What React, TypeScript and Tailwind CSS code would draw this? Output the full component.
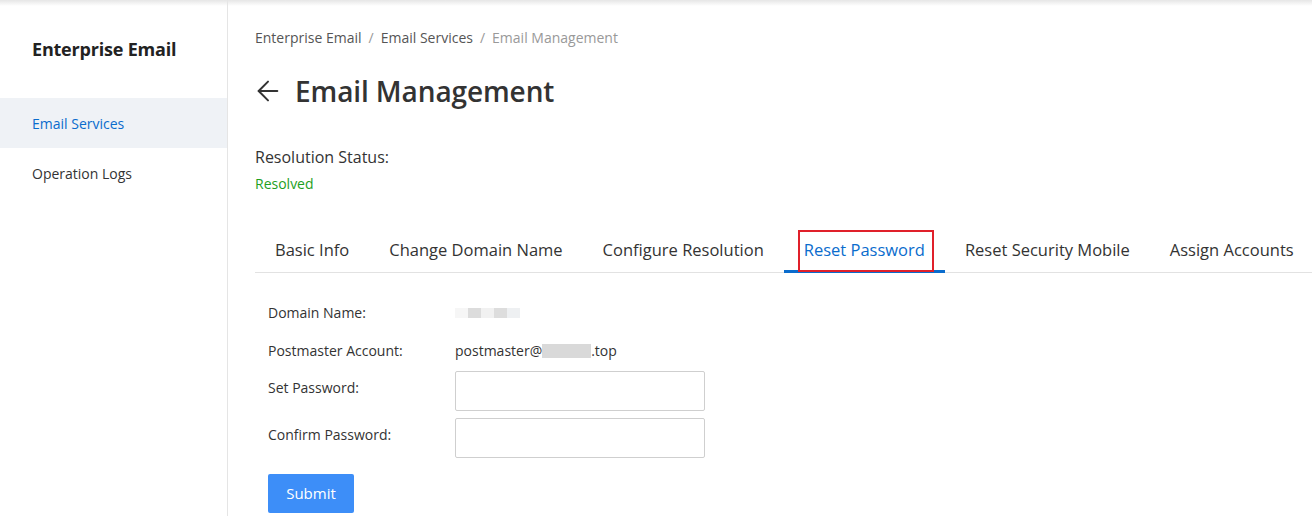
import { ArrowLeft } from "lucide-react";

const tabs = [
  "Basic Info",
  "Change Domain Name",
  "Configure Resolution",
  "Reset Password",
  "Reset Security Mobile",
  "Assign Accounts",
];

function Blur({ widths }: { widths: string[] }) {
  // pixelated placeholder for masked text
  return (
    <span className="inline-flex items-center h-[14px] align-middle">
      {widths.map((c, i) => (
        <span key={i} className={`inline-block h-[10px] w-[13px] ${c}`} />
      ))}
    </span>
  );
}

export default function App() {
  return (
    <div
      className="w-[1312px] h-[516px] flex bg-white text-[#333] overflow-hidden relative"
      style={{ fontFamily: '"Open Sans", "Noto Sans", sans-serif' }}
    >
      {/* top shadow */}
      <div className="absolute top-0 left-0 right-0 h-[6px] bg-gradient-to-b from-[#e6e6e6] to-transparent pointer-events-none" />

      <aside className="w-[228px] shrink-0 border-r border-[#e5e5e5] pt-[36px]">
        <div className="px-[32px] text-[18px] font-bold text-[#222] leading-[26px] tracking-[-0.2px]">
          Enterprise Email
        </div>
        <nav className="mt-[36px]">
          <div className="h-[50px] flex items-center px-[32px] bg-[#eff2f6] text-[14px] text-[#0a6ccd]">
            Email Services
          </div>
          <div className="h-[50px] flex items-center px-[32px] text-[14px] text-[#333]">
            Operation Logs
          </div>
        </nav>
      </aside>

      <main className="flex-1 pl-[27px] pt-[28px]">
        <div className="flex items-center gap-[7px] text-[14px] leading-[20px] text-[#555]">
          <span>Enterprise Email</span>
          <span className="text-[#999]">/</span>
          <span>Email Services</span>
          <span className="text-[#999]">/</span>
          <span className="text-[#999]">Email Management</span>
        </div>

        <div className="mt-[23px] flex items-center gap-[11px]">
          <ArrowLeft className="w-[32px] h-[32px] text-[#333] -ml-[3px]" strokeWidth={1.5} />
          <h1 className="text-[28px] font-semibold leading-[40px] text-[#333] tracking-[-0.1px]">
            Email Management
          </h1>
        </div>

        <div className="mt-[34px] text-[16px] leading-[24px] text-[#333]">Resolution Status:</div>
        <div className="mt-[5px] text-[14px] leading-[20px] text-[#1ea01e]">Resolved</div>

        <div className="mt-[34px] flex border-b border-[#e2e2e2]">
          {tabs.map((t) => {
            const active = t === "Reset Password";
            return (
              <div
                key={t}
                className={`relative px-[20px] h-[44px] flex items-center text-[16.5px] whitespace-nowrap ${
                  active ? "text-[#0a6ccd]" : "text-[#333]"
                }`}
              >
                {t}
                {active && (
                  <>
                    <span className="absolute left-0 right-0 bottom-[-1px] h-[3px] bg-[#0a6ccd]" />
                    <span className="absolute left-[14px] right-[11px] top-[2px] bottom-[0px] border-2 border-[#e0202a]" />
                  </>
                )}
              </div>
            );
          })}
        </div>

        <div className="pl-[13px] pt-[24px] text-[14px] text-[#333]">
          <div className="grid grid-cols-[187px_250px] items-center gap-y-[7px]">
            <div className="h-[31px] flex items-center">Domain Name:</div>
            <div className="h-[31px] flex items-center">
              <Blur widths={["bg-[#f6f6f6]", "bg-[#dcdcdc]", "bg-[#f1f1f1]", "bg-[#dddddd]", "bg-[#eef0f2]", "bg-[#ffffff]"]} />
            </div>
            <div className="h-[31px] flex items-center">Postmaster Account:</div>
            <div className="h-[31px] flex items-center">
              postmaster@
              <span className="inline-block w-[49px] h-[14px] bg-[#d9d9d9]" />
              .top
            </div>
          </div>
          <div className="grid grid-cols-[187px_250px] items-center gap-y-[7px] mt-[5px]">
            <div className="h-[40px] flex items-center pb-[7px]">Set Password:</div>
            <input type="password" className="h-[40px] w-[250px] border border-[#cfcfcf] rounded-[2px] bg-white" />
            <div className="h-[40px] flex items-center pb-[7px]">Confirm Password:</div>
            <input type="password" className="h-[40px] w-[250px] border border-[#cfcfcf] rounded-[2px] bg-white" />
          </div>
          <button className="mt-[16px] w-[86px] h-[39px] bg-[#3d8ef8] text-white text-[15px] rounded-[2px]">
            Submit
          </button>
        </div>
      </main>
    </div>
  );
}
